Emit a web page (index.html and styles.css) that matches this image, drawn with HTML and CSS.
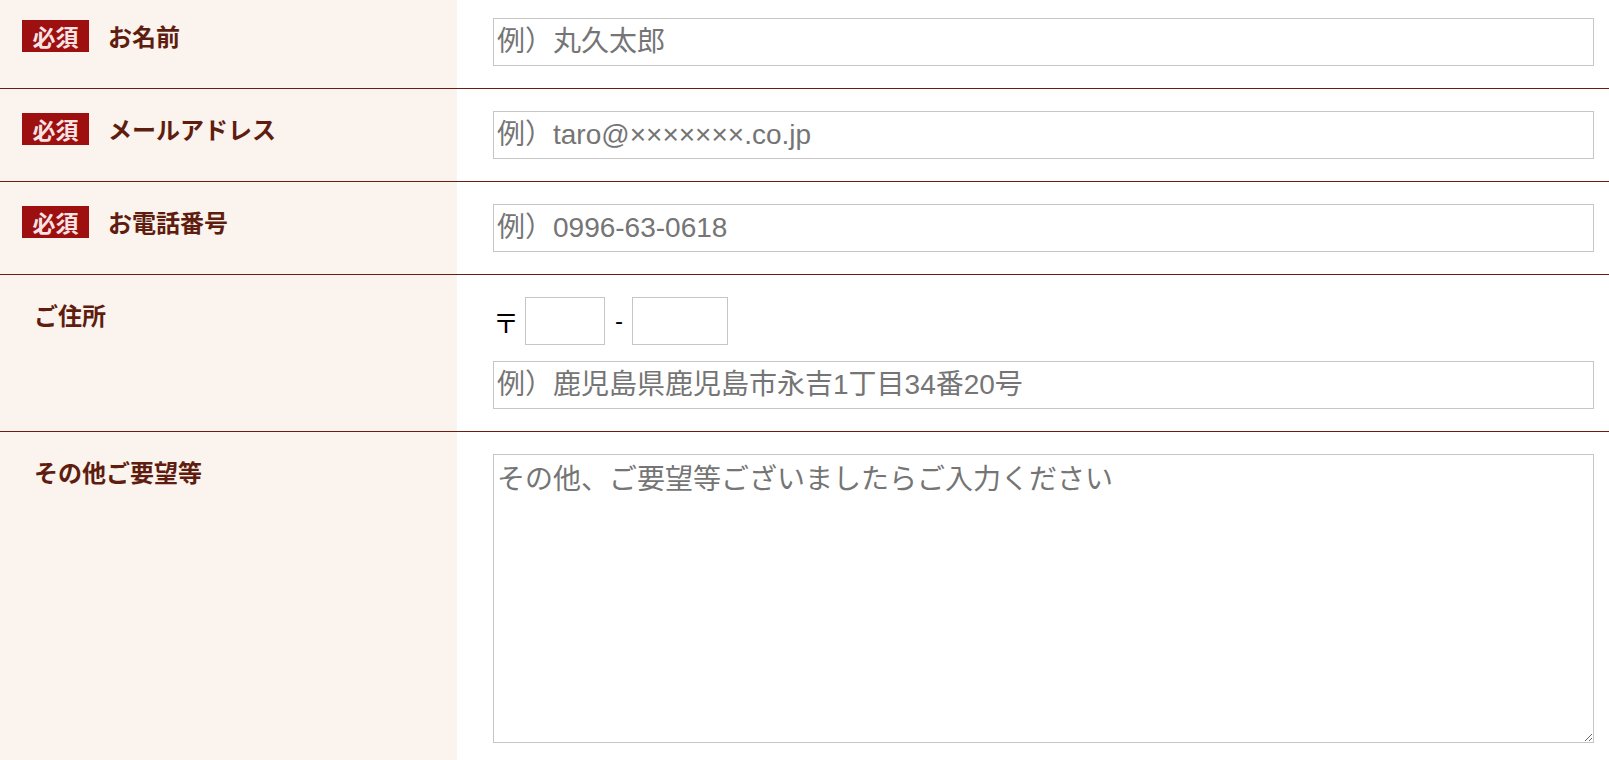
FILE: index.html
```html
<!DOCTYPE html>
<html lang="ja">
<head>
  <meta charset="utf-8">
  <title>お問い合わせフォーム</title>
  <link rel="stylesheet" href="styles.css">
</head>
<body>
  <form class="contact-form">
    <div class="form-row">
      <div class="form-label">
        <span class="badge">必須</span>
        <span class="label-text">お名前</span>
      </div>
      <div class="form-field">
        <input type="text" class="text-input" placeholder="例）丸久太郎">
      </div>
    </div>

    <div class="form-row">
      <div class="form-label">
        <span class="badge">必須</span>
        <span class="label-text">メールアドレス</span>
      </div>
      <div class="form-field">
        <input type="email" class="text-input" placeholder="例）taro@×××××××.co.jp">
      </div>
    </div>

    <div class="form-row">
      <div class="form-label">
        <span class="badge">必須</span>
        <span class="label-text">お電話番号</span>
      </div>
      <div class="form-field">
        <input type="tel" class="text-input" placeholder="例）0996-63-0618">
      </div>
    </div>

    <div class="form-row">
      <div class="form-label no-badge">
        <span class="label-text">ご住所</span>
      </div>
      <div class="form-field">
        <div class="zip-group">
          <span class="zip-mark">〒</span>
          <input type="text" class="text-input zip-first">
          <span class="zip-sep">-</span>
          <input type="text" class="text-input zip-second">
        </div>
        <input type="text" class="text-input" placeholder="例）鹿児島県鹿児島市永吉1丁目34番20号">
      </div>
    </div>

    <div class="form-row">
      <div class="form-label no-badge">
        <span class="label-text">その他ご要望等</span>
      </div>
      <div class="form-field">
        <textarea class="text-area" placeholder="その他、ご要望等ございましたらご入力ください"></textarea>
      </div>
    </div>
  </form>
</body>
</html>
```

FILE: styles.css
```css
body {
  margin: 0;
  background-color: #fff;
  font-family: "Liberation Sans", "Noto Sans CJK JP", sans-serif;
  overflow: hidden;
}
.contact-form {
  margin-top: -4px;
}
.form-row {
  display: grid;
  grid-template-columns: 457px 1fr;
  border-bottom: 1px solid #6b1d12;
}
.form-label {
  display: flex;
  align-items: flex-start;
  background-color: #faf3ee;
  padding: 24px 22px;
}
.form-label.no-badge {
  padding-left: 34px;
}
.badge {
  display: flex;
  justify-content: center;
  align-items: center;
  width: 67px;
  height: 32px;
  margin-right: 19px;
  background-color: #9e0f0f;
  color: #f6e4e4;
  font-size: 23px;
  font-weight: bold;
  font-family: "Noto Sans CJK JP", sans-serif;
}
.label-text {
  font-family: "Noto Sans CJK JP", sans-serif;
  font-size: 24px;
  line-height: 32px;
  font-weight: bold;
  color: #5f1d0f;
}
.form-field {
  display: flex;
  flex-direction: column;
  gap: 16px;
  padding: 22px 15px 22px 36px;
}
.text-input {
  width: 100%;
  height: 48px;
  box-sizing: border-box;
  border: 1px solid #c6c6c6;
  border-radius: 0;
  padding: 0 3px;
  font-family: inherit;
  font-size: 28px;
  color: #333;
  background-color: #fff;
}
.text-input::placeholder,
.text-area::placeholder {
  color: #757575;
}
.zip-group {
  display: flex;
  align-items: center;
}
.zip-mark {
  font-family: "Noto Sans CJK JP", sans-serif;
  font-size: 26px;
  color: #000;
  margin-right: 6px;
}
.zip-sep {
  font-size: 24px;
  color: #000;
  margin: 0 9px 0 10px;
}
.zip-first {
  width: 80px;
}
.zip-second {
  width: 96px;
}
.text-area {
  width: 100%;
  height: 289px;
  box-sizing: border-box;
  border: 1px solid #c6c6c6;
  border-radius: 0;
  padding: 2px 3px;
  font-family: inherit;
  font-size: 28px;
  color: #333;
  background-color: #fff;
}
```
